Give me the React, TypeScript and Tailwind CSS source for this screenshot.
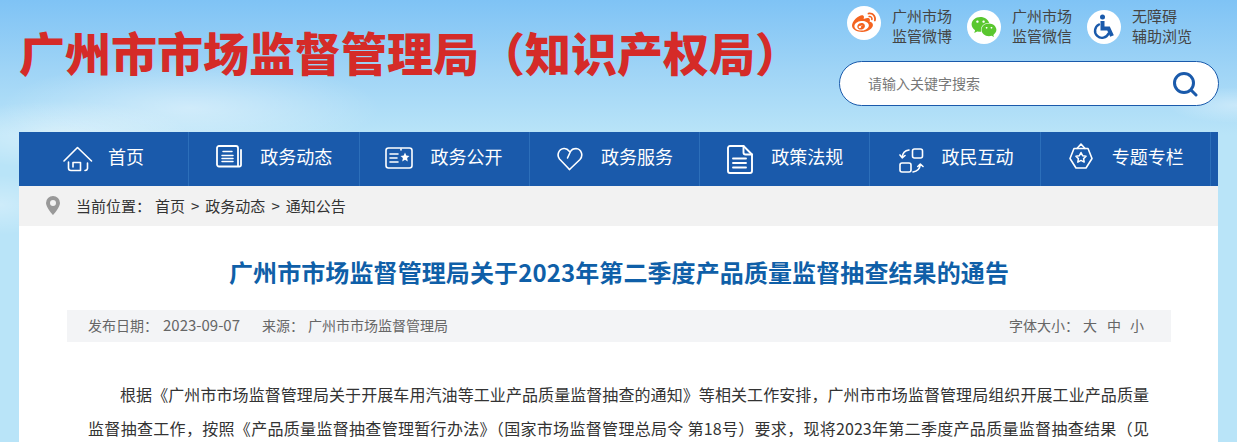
import React from "react";
import { FaWeibo, FaWeixin } from "react-icons/fa";

const s = { fill: "none", stroke: "white", strokeWidth: 1.6, strokeLinecap: "round" as const, strokeLinejoin: "round" as const };

const Home = () => (
  <svg width="30" height="26" viewBox="0 0 30 26" {...s}>
    <path d="M1 15 14.500 1.500 28.500 15" />
    <path d="M5.500 16v6a2.500 2.500 0 0 0 2.500 2.500h9.500V16.500H10V21" />
    <path d="M24.500 17v5.500a2.500 2.500 0 0 1-2.500 2" />
  </svg>
);
const News = () => (
  <svg width="26" height="23" viewBox="0 0 26 23" {...s}>
    <path d="M22 21.500H3a2 2 0 0 1-2-2V3a2 2 0 0 1 2-2h17a2 2 0 0 1 2 2v18.500h1.500a1.500 1.500 0 0 0 1.500-1.500V5" strokeWidth="1.800" />
    <path d="M7 6.500h9M6 10.500h11M6 13.500h11M6 16.500h11" strokeWidth="1.500" />
  </svg>
);
const Open = () => (
  <svg width="28" height="22" viewBox="0 0 28 22" {...s}>
    <rect x="1" y="1" width="26" height="20" rx="2.500" />
    <path d="M5 7h8M5 11h7M5 15h8" />
    <path d="M20 5.500l1.300 3.100 3.200.3-2.400 2.200.7 3.300-2.800-1.700-2.800 1.700.7-3.300-2.400-2.200 3.200-.3z" fill="white" stroke="none" />
    <path d="M16 2v1" />
  </svg>
);
const Heart = () => (
  <svg width="26" height="24" viewBox="0 0 26 24" {...s}>
    <path d="M12.500 22.500 2.500 12C-.5 8 1.500 2 7 1.500c2.500-.2 4 1 5.500 3" />
    <path d="M10.500 11l3-6.500c1-2 3-3 5.500-3 5.500.5 7.500 7 4 11L12.500 22.500" />
  </svg>
);
const Doc = () => (
  <svg width="26" height="29" viewBox="0 0 26 29" {...s} strokeWidth="1.900">
    <path d="M16.500 1H3a2 2 0 0 0-2 2v23a2 2 0 0 0 2 2h20a2 2 0 0 0 2-2V9.500z" />
    <path d="M16.500 1v6.500a2 2 0 0 0 2 2H25" />
    <path d="M6 13.500h13M6 18h13M6 22.500h13" />
  </svg>
);
const Interact = () => (
  <svg width="25" height="25" viewBox="0 0 25 25" {...s}>
    <rect x="13.500" y="1" width="10" height="9" rx="2" />
    <rect x="1" y="15" width="11" height="9" rx="2" />
    <path d="M10 2c-4 .5-6.500 3-6.800 7.500M1 7l2.200 2.800L6 7.500" />
    <path d="M14 24c4-.5 6.800-3 7.300-7.500M18.800 18.500l2.500-2.500 2.700 2.500" />
  </svg>
);
const Badge = () => (
  <svg width="24" height="26" viewBox="0 0 24 26" {...s}>
    <path d="M5 5.500H19L23 15.500 17 25H7L1 15.500z" />
    <path d="M8 5.500 12 1l4 4.500" />
    <path d="M12 9.500l1.600 3.200 3.500.5-2.500 2.400.6 3.500-3.200-1.700-3.200 1.700.6-3.500-2.500-2.400 3.500-.5z" strokeWidth="1.500" />
  </svg>
);
const Wheelchair = () => (
  <svg width="24" height="26" viewBox="0 0 24 26" fill="none" stroke="#1a5aab" strokeLinecap="round" strokeLinejoin="round">
    <circle cx="10.500" cy="3" r="2.500" fill="#1a5aab" stroke="none" />
    <path d="M8.500 6.500h4v5h4.500v2h-3.500l5 1.500 2.500 6.500" strokeWidth="0" />
    <path d="M10.500 7v7.500h6l3.500 7.500" strokeWidth="4" strokeLinecap="butt" strokeLinejoin="miter" />
    <path d="M7 10.500a7 7 0 1 0 9.500 9" strokeWidth="2.400" />
  </svg>
);

const nav = [
  { label: "首页", icon: <Home />, pad: "pl-[44px]", box: "w-[45px]", nudge: "" },
  { label: "政务动态", icon: <News />, pad: "pl-[27px]", box: "w-[44px]", nudge: "mb-[6px]" },
  { label: "政务公开", icon: <Open />, pad: "pl-[25px]", box: "w-[46px]", nudge: "mb-[2px]" },
  { label: "政务服务", icon: <Heart />, pad: "pl-[27px]", box: "w-[44px]", nudge: "" },
  { label: "政策法规", icon: <Doc />, pad: "pl-[27px]", box: "w-[44px]", nudge: "" },
  { label: "政民互动", icon: <Interact />, pad: "pl-[29px]", box: "w-[42px]", nudge: "mt-[2px]" },
  { label: "专题专栏", icon: <Badge />, pad: "pl-[28px]", box: "w-[43px]", nudge: "mb-[6px]" },
];

function Quick({ icon, top, bottom, offset }: { icon: React.ReactNode; top: string; bottom: string; offset: string }) {
  return (
    <div className="flex w-[120px] items-start">
      <div className={`flex h-[34px] w-[34px] shrink-0 items-center justify-center rounded-full bg-white ${offset}`}>{icon}</div>
      <div className="ml-[11px] text-[15px] leading-[20px] text-[#444] whitespace-nowrap">
        <div>{top}</div>
        <div>{bottom}</div>
      </div>
    </div>
  );
}

export default function App() {
  return (
    <div
      lang="zh-CN"
      className="h-[442px] overflow-hidden font-['Noto_Sans_CJK_SC','Noto_Sans',sans-serif] bg-[radial-gradient(ellipse_190px_48px_at_190px_108px,rgba(255,255,255,0.42),transparent),radial-gradient(ellipse_130px_34px_at_60px_135px,rgba(255,255,255,0.4),transparent),radial-gradient(ellipse_60px_30px_at_0px_205px,rgba(255,255,255,0.3),transparent),radial-gradient(ellipse_70px_18px_at_1237px_105px,rgba(255,255,255,0.35),transparent),linear-gradient(180deg,#7fc3f5_0px,#9fd4f6_70px,#b9e4f8_135px,#b9e4f8_100%)]"
    >
      <div className="ml-[19px] w-[1199px]">
        <header className="flex h-[132px] justify-between">
          <h1 className="mt-[19px] h-[64px] text-[46px] leading-[64px] font-black text-[#d52b28] whitespace-nowrap">
            广州市市场监督管理局（知识产权局）
          </h1>
          <div className="mr-[-1px] flex w-[380px] flex-col">
            <div className="ml-[8px] flex h-[61px] items-start pt-[6px]">
              <Quick icon={<FaWeibo className="text-[24px] text-[#f4631f]" />} top="广州市场" bottom="监管微博" offset="" />
              <Quick icon={<FaWeixin className="text-[26px] text-[#5ac72f]" />} top="广州市场" bottom="监管微信" offset="mt-[4px]" />
              <Quick icon={<Wheelchair />} top="无障碍" bottom="辅助浏览" offset="mt-[4px]" />
            </div>
            <div className="flex h-[45px] items-center justify-between rounded-[23px] border border-[#1a5aab] bg-white pl-[28px] pr-[20px]">
              <span className="text-[14px] text-[#777]">请输入关键字搜索</span>
              <svg width="26" height="26" viewBox="0 0 26 26" fill="none" stroke="#1a5aab" strokeWidth="3" strokeLinecap="round">
                <circle cx="12" cy="12" r="9.500" />
                <path d="M19.500 19.500 24 24" />
              </svg>
            </div>
          </div>
        </header>

        <nav className="flex h-[54px] bg-[#1a5aab] text-white">
          {nav.map((n) => (
            <div key={n.label} className={`flex h-full w-[170.3px] items-center border-r border-[#2c6fba] ${n.pad}`}>
              <span className={`flex shrink-0 items-center ${n.box} ${n.nudge}`}>{n.icon}</span>
              <span className="mb-[6px] text-[18px] whitespace-nowrap">{n.label}</span>
            </div>
          ))}
        </nav>

        <div className="flex h-[40px] items-center bg-[#f2f2f2] pl-[27px] text-[15px] text-[#333]">
          <svg width="14" height="19" viewBox="0 0 14 19" className="mb-[2px] mr-[16px]">
            <path d="M7 0a7 7 0 0 0-7 7c0 4.500 7 12 7 12s7-7.500 7-12a7 7 0 0 0-7-7zm0 10a3 3 0 1 1 0-6 3 3 0 0 1 0 6z" fill="#999" />
          </svg>
          <span>当前位置：</span>
          <span className="ml-[4px]">首页</span>
          <span className="mx-[6px]">&gt;</span>
          <span>政务动态</span>
          <span className="mx-[6px]">&gt;</span>
          <span>通知公告</span>
        </div>

        <main className="h-[216px] bg-white pl-[48px] pr-[47px]">
          <h2 className="pt-[28px] text-center text-[24px] leading-[36px] font-bold tracking-[0.1px] text-[#0f5fa8]">
            广州市市场监督管理局关于2023年第二季度产品质量监督抽查结果的通告
          </h2>
          <div className="mt-[20px] flex h-[32px] items-center justify-between bg-[#f3f4f6] pb-[2px] pl-[21px] pr-[27px] text-[14px] text-[#666]">
            <div className="flex items-center">
              <span>发布日期：</span>
              <span className="ml-[5px] text-[15px]">2023-09-07</span>
              <span className="ml-[22px]">来源：</span>
              <span className="ml-[4px]">广州市市场监督管理局</span>
            </div>
            <div className="flex">
              <span>字体大小：</span>
              <span className="ml-[4px]">大</span>
              <span className="ml-[10px]">中</span>
              <span className="ml-[9px]">小</span>
            </div>
          </div>
          <p className="ml-[21px] mr-[22px] mt-[35px] text-justify indent-[32px] text-[16px] leading-[34px] text-[#333] [text-align-last:justify]">
            根据《广州市市场监督管理局关于开展车用汽油等工业产品质量监督抽查的通知》等相关工作安排，广州市市场监督管理局组织开展工业产品质量
            <br />
            监督抽查工作，按照《产品质量监督抽查管理暂行办法》（国家市场监督管理总局令 第18号）要求，现将2023年第二季度产品质量监督抽查结果（见
          </p>
        </main>
      </div>
    </div>
  );
}
